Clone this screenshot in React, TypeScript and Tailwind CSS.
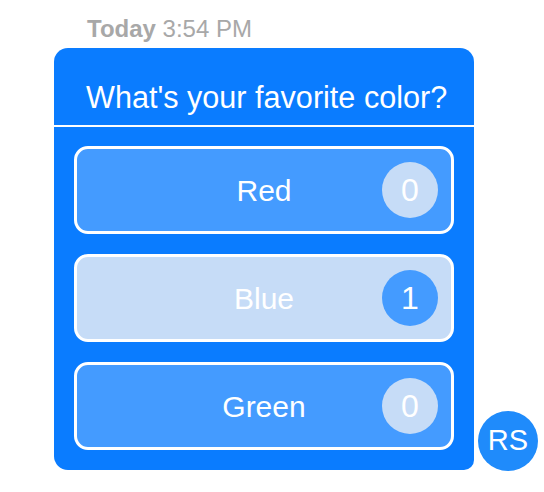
import React from "react";

const options = [
  { label: "Red", count: 0, selected: false },
  { label: "Blue", count: 1, selected: true },
  { label: "Green", count: 0, selected: false },
];

export default function App() {
  return (
    <div
      className="w-[544px] h-[492px] bg-white relative"
      style={{ fontFamily: '"Liberation Sans", Arial, sans-serif' }}
    >
      <div className="pt-[17px] pl-[87px] text-[24px] leading-[24px] text-[#a8a8a8]">
        <span className="font-bold">Today</span> 3:54 PM
      </div>
      <div className="flex items-end mt-[7px] ml-[54px]">
        <div className="w-[420px] bg-[#0a7cff] rounded-[14px] rounded-br-[10px] pb-[20px]">
          <div className="pt-[34px] pl-[32px] text-[30.6px] leading-[30px] text-white h-[77px] whitespace-nowrap">
            What's your favorite color?
          </div>
          <div className="h-[2px] bg-white" />
          <div className="flex flex-col gap-[20px] px-[20px] pt-[19px]">
            {options.map((o) => (
              <div
                key={o.label}
                className={`relative h-[88px] w-[380px] rounded-[14px] border-[3px] border-white flex items-center justify-center ${
                  o.selected ? "bg-[#c6dcf7]" : "bg-[#449bff]"
                }`}
              >
                <span className="text-[30px] text-white">{o.label}</span>
                <div
                  className={`absolute right-[13px] top-[13px] w-[56px] h-[56px] rounded-full flex items-center justify-center text-[32px] text-white ${
                    o.selected ? "bg-[#449bff]" : "bg-[#c6dcf7]"
                  }`}
                >
                  {o.count}
                </div>
              </div>
            ))}
          </div>
        </div>
        <div className="ml-[4px] mb-[-1px] w-[60px] h-[60px] rounded-full bg-[#1f8bfb] flex items-center justify-center text-white text-[29px]">
          RS
        </div>
      </div>
    </div>
  );
}
